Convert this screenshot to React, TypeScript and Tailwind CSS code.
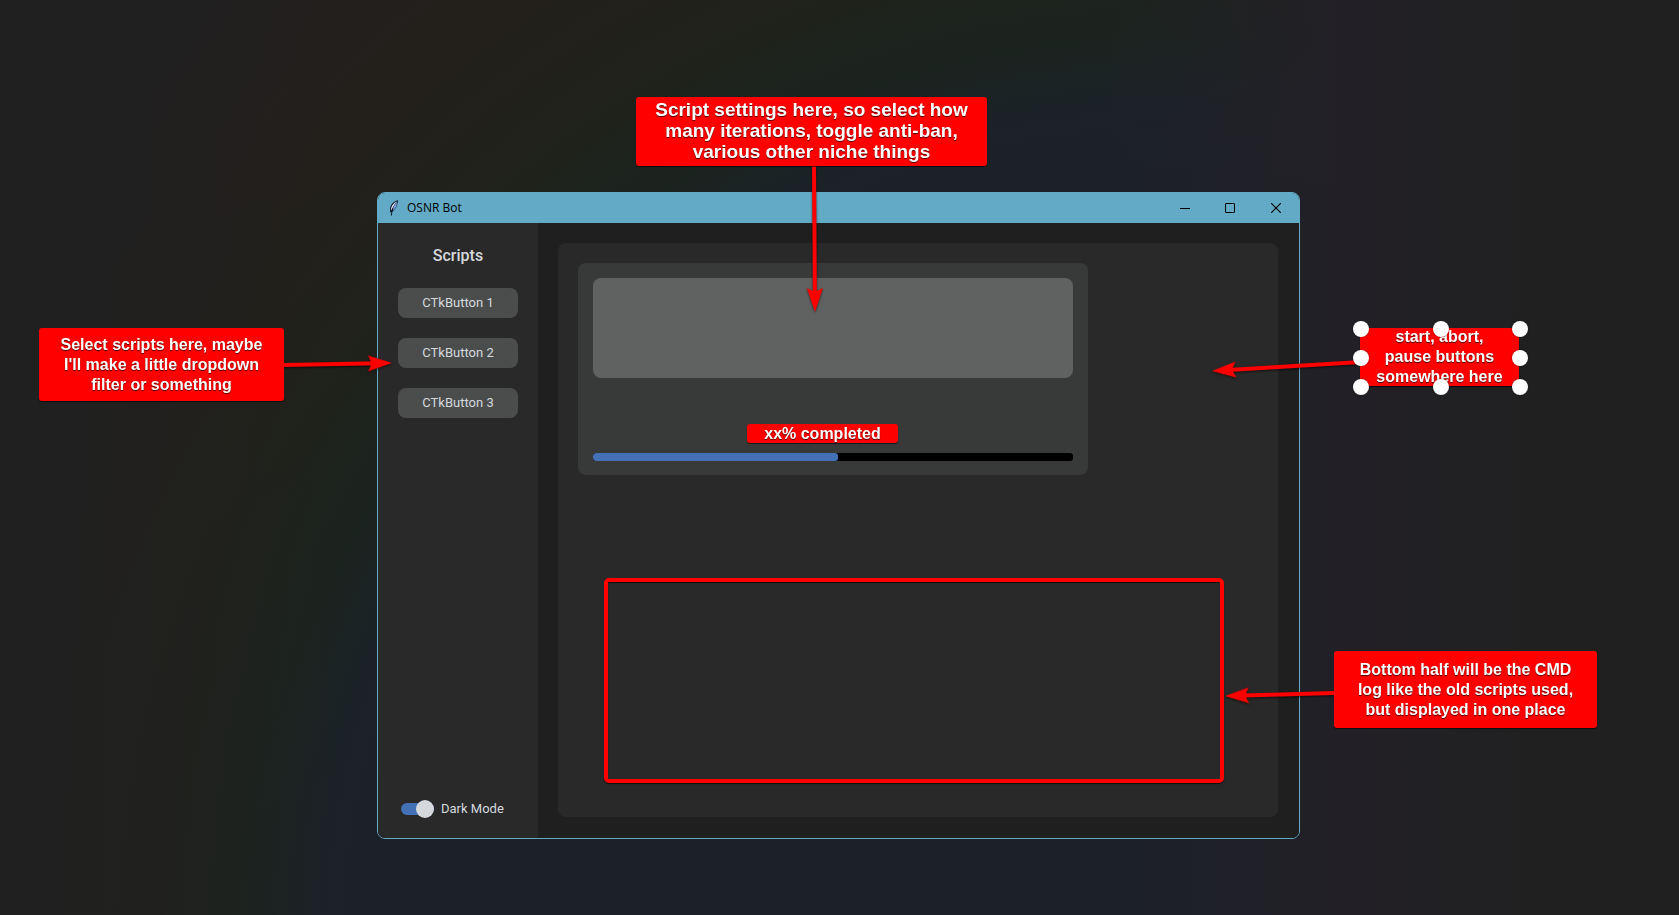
import React, { useState } from "react";

function Callout({ className, lines }: { className: string; lines: string[] }) {
  return (
    <p
      className={
        "absolute flex flex-col items-center justify-center whitespace-nowrap bg-[#ff0000] text-center font-['Liberation_Sans',Arial,sans-serif] font-bold text-white shadow-[0_1px_1px_rgba(0,0,0,0.6)] [text-shadow:0_1px_1px_rgba(0,0,0,0.7)] " +
        className
      }
    >
      {lines.map((line) => (
        <span key={line}>{line}</span>
      ))}
    </p>
  );
}

/* Straight arrow from (x1, y1) to its tip at (x2, y2), in window coordinates. */
function Arrow({ x1, y1, x2, y2 }: { x1: number; y1: number; x2: number; y2: number }) {
  const length = Math.hypot(x2 - x1, y2 - y1);
  const angle = (Math.atan2(y2 - y1, x2 - x1) * 180) / Math.PI;
  return (
    <g transform={`translate(${x2} ${y2}) rotate(${angle})`}>
      <path d={`M${-length} -2H-21L-24 -8L0 0L-24 8L-21 2H${-length}Z`} fill="#ff0000" />
    </g>
  );
}

function Feather() {
  return (
    <svg className="h-4 w-4" viewBox="0 0 16 16" aria-hidden="true">
      <path d="M12 .3C8.500 1 5 4 4.200 7.500L4 12.200L5.500 12.200C9 10.200 11.500 6 12 .3Z" fill="#10162c" />
      <path d="M11 1.500C8.300 2.500 6 5 5.200 8L5 11C6 8.500 7.800 5 11 1.500Z" fill="#e2eefa" />
      <path d="M11 1.500C8.500 5 7 8 6 11C9.200 9.200 11 6 11 1.500Z" fill="#7fa5ea" />
      <path d="M7 8.500C6.200 10.500 5.700 12 5.300 15.500" stroke="#0b0f1c" strokeWidth="1" fill="none" />
    </svg>
  );
}

function TitleBar() {
  const control = "flex h-full items-center justify-center hover:bg-black/10";
  return (
    <header className="flex h-[30px] items-center bg-[#62aac5] pl-2 text-black">
      <Feather />
      <h1 className="ml-[5px] flex-1 font-['Open_Sans','Noto_Sans',sans-serif] text-[12px] leading-4">OSNR Bot</h1>
      <button type="button" aria-label="Minimize" className={control + " w-11"}>
        <svg className="h-2.5 w-2.5" viewBox="0 0 10 10">
          <path d="M0 5.500H10" stroke="black" />
        </svg>
      </button>
      <button type="button" aria-label="Maximize" className={control + " w-[46px]"}>
        <svg className="h-2.5 w-2.5" viewBox="0 0 10 10">
          <rect x=".5" y=".5" width="9" height="9" rx=".5" fill="none" stroke="black" />
        </svg>
      </button>
      <button type="button" aria-label="Close" className={control + " w-[46px]"}>
        <svg className="h-2.5 w-2.5" viewBox="0 0 10 10">
          <path d="M.2.200L9.800 9.800M9.800.200L.200 9.800" stroke="black" strokeWidth="1.100" />
        </svg>
      </button>
    </header>
  );
}

function Sidebar() {
  const [dark, setDark] = useState(true);
  return (
    <nav className="flex w-40 shrink-0 flex-col bg-[#292929] px-5 pt-[21px] pb-5 text-[#d5d9de]">
      <h2 className="mb-5 text-center text-[16px] leading-6 font-medium">Scripts</h2>
      <div className="flex flex-col gap-5">
        {["CTkButton 1", "CTkButton 2", "CTkButton 3"].map((name) => (
          <button key={name} type="button" className="h-[30px] rounded-lg bg-[#4b4d4c] text-[13px]">
            {name}
          </button>
        ))}
      </div>
      <label className="mt-auto ml-[3px] flex h-[18px] items-center gap-[7px] text-[13px]">
        <input
          type="checkbox"
          role="switch"
          checked={dark}
          onChange={(e) => setDark(e.target.checked)}
          className="flex h-3 w-[33px] appearance-none items-center rounded-full bg-[#4a4d50] before:block before:h-[18px] before:w-[18px] before:rounded-full before:bg-[#d5d9de] checked:justify-end checked:bg-[#4470b5]"
        />
        Dark Mode
      </label>
    </nav>
  );
}

function Workspace() {
  const progress = 51;
  return (
    <main className="flex min-w-0 flex-1 bg-[#1f1f1f] pt-5 pr-[21px] pb-[21px] pl-5">
      <div className="flex flex-1 flex-col justify-between rounded-lg bg-[#292929] px-5 pt-5 pb-[34px]">
        <section className="flex max-w-[510px] flex-col rounded-lg bg-[#383a39] p-[15px] pb-3.5">
          <div className="h-[100px] rounded-lg bg-[#606261]" />
          <div
            role="progressbar"
            aria-label="Script progress"
            aria-valuenow={progress}
            className="mt-[75px] h-2 overflow-hidden rounded-[3px] bg-black"
          >
            <div className="h-full rounded-[3px] bg-[#4470b5]" style={{ width: `${progress}%` }} />
          </div>
        </section>
        <section
          aria-label="Log"
          className="mr-[34px] ml-[26px] h-[205px] rounded-[5px] border-4 border-[#ff0000] shadow-[0_1px_1px_rgba(0,0,0,0.7),inset_0_1px_1px_rgba(0,0,0,0.7)]"
        />
      </div>
    </main>
  );
}

function Annotations() {
  const handles = [
    "top-[-7px] left-[-7px]",
    "top-[-7px] left-[73px]",
    "top-[-7px] left-[152px]",
    "top-[22px] left-[-7px]",
    "top-[22px] left-[152px]",
    "top-[51px] left-[-7px]",
    "top-[51px] left-[73px]",
    "top-[51px] left-[152px]",
  ];
  return (
    <>
      <svg className="pointer-events-none absolute inset-0 h-full w-full overflow-visible drop-shadow-[0_1px_1px_rgba(0,0,0,0.6)]" aria-hidden="true">
        <Arrow x1={437} y1={-26} x2={438} y2={120} />
        <Arrow x1={-94} y1={173} x2={15} y2={171} />
        <Arrow x1={984} y1={170} x2={835} y2={179} />
        <Arrow x1={958} y1={501} x2={848} y2={504} />
      </svg>
      <Callout
        className="top-[-95px] left-[259px] h-[69px] w-[351px] rounded-[3px] pb-0.5 text-[19px] leading-[21px]"
        lines={["Script settings here, so select how", "many iterations, toggle anti-ban,", "various other niche things"]}
      />
      <Callout
        className="top-[136px] left-[-338px] h-[73px] w-[245px] rounded-[3px] text-[16px] leading-5"
        lines={["Select scripts here, maybe", "I'll make a little dropdown", "filter or something"]}
      />
      <Callout
        className="top-[459px] left-[957px] h-[77px] w-[263px] rounded-[3px] text-[16px] leading-5"
        lines={["Bottom half will be the CMD", "log like the old scripts used,", "but displayed in one place"]}
      />
      <Callout className="top-[232px] left-[370px] h-[19px] w-[151px] rounded-[3px] text-[16px] leading-5" lines={["xx% completed"]} />
      <div className="absolute top-[136px] left-[983px] h-[58px] w-[159px]">
        <Callout className="inset-0 text-[16px] leading-5" lines={["start, abort,", "pause buttons", "somewhere here"]} />
        {handles.map((place) => (
          <span key={place} className={"absolute h-4 w-4 rounded-full bg-white shadow-[0_0_2px_rgba(0,0,0,0.5)] " + place} />
        ))}
      </div>
    </>
  );
}

export default function App() {
  return (
    <div className="relative isolate flex min-h-screen justify-center overflow-hidden bg-[#202020] pt-48 pr-0.5 pb-[76px] font-[Roboto,sans-serif]">
      <div className="absolute inset-0 -z-10 bg-[linear-gradient(90deg,#202020_3%,#20202000_20%,#22202600_66%,#222026_80%,#202020_93%),radial-gradient(circle_farthest-corner_at_70%_105%,#1c2029_52%,#1b2226_57%,#1b231f_61%,#1f221b_67%,#22201a_74%,#231f1d_82%,#202020_97%)]" />
      <div className="relative flex min-h-[647px] w-full max-w-[923px]">
        <div className="flex flex-1 flex-col overflow-hidden rounded-lg border border-[#62aac5] bg-[#1f1f1f]">
          <TitleBar />
          <div className="flex flex-1">
            <Sidebar />
            <Workspace />
          </div>
        </div>
        <Annotations />
      </div>
    </div>
  );
}
